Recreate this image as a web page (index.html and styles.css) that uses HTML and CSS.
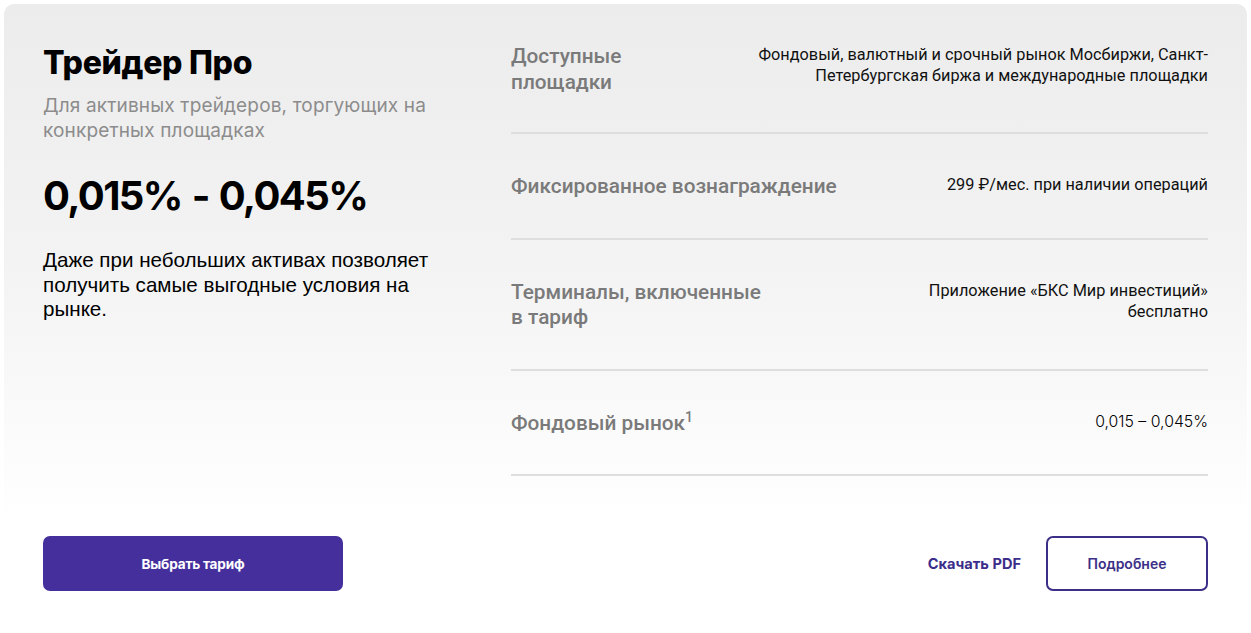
FILE: index.html
```html
<!DOCTYPE html>
<html lang="ru">
<head>
<meta charset="utf-8">
<title>Трейдер Про</title>
<link rel="stylesheet" href="styles.css">
</head>
<body>
<div class="page">
  <section class="card">
    <div class="intro">
      <h1 class="title">Трейдер Про</h1>
      <p class="subtitle">Для активных трейдеров, торгующих на конкретных площадках</p>
      <div class="price">0,015% - 0,045%</div>
      <p class="desc">Даже при небольших активах позволяет получить самые выгодные условия на рынке.</p>
    </div>
    <div class="specs">
      <div class="row">
        <div class="label">Доступные<br>площадки</div>
        <div class="value">Фондовый, валютный и срочный рынок Мосбиржи, Санкт-Петербургская биржа и международные площадки</div>
      </div>
      <div class="row">
        <div class="label">Фиксированное вознаграждение</div>
        <div class="value">299 ₽/мес. при наличии операций</div>
      </div>
      <div class="row">
        <div class="label">Терминалы, включенные<br>в тариф</div>
        <div class="value">Приложение «БКС Мир инвестиций»<br>бесплатно</div>
      </div>
      <div class="row">
        <div class="label">Фондовый рынок<sup>1</sup></div>
        <div class="value value-alt">0,015 – 0,045%</div>
      </div>
    </div>
  </section>
  <div class="actions">
    <button class="btn btn-primary">Выбрать тариф</button>
    <div class="actions-right">
      <a class="link-pdf" href="#">Скачать PDF</a>
      <button class="btn btn-outline">Подробнее</button>
    </div>
  </div>
</div>
</body>
</html>
```
FILE: styles.css
```css
* { box-sizing: border-box; }
html, body { margin: 0; padding: 0; background: #fff; }
body { font-family: Inter, "Liberation Sans", sans-serif; color: #000; }
.page { padding: 4px 4px 0 4px; width: 1251px; }
.card {
  display: flex;
  border-radius: 10px;
  background: linear-gradient(to bottom, #ececec 0%, #f3f3f3 50%, #ffffff 100%);
  padding: 40px 39px 46px 39px;
  height: 518px;
}
.intro { width: 420px; flex: none; }
.title {
  margin: 0;
  font-family: Inter, sans-serif;
  font-weight: 800;
  font-size: 32px;
  line-height: 38px;
  letter-spacing: -0.3px;
}
.subtitle {
  margin: 11px 0 0;
  font-family: Inter, sans-serif;
  font-size: 19px;
  line-height: 25px;
  color: #8c8c8c;
  letter-spacing: 0.15px;
  width: 410px;
}
.price {
  margin-top: 28px;
  font-family: Inter, sans-serif;
  font-weight: 700;
  font-size: 40px;
  line-height: 50px;
  letter-spacing: -1.6px;
  word-spacing: 2px;
}
.desc {
  margin: 27px 0 0;
  font-family: "Liberation Sans", Arial, sans-serif;
  font-size: 20.6px;
  line-height: 24.5px;
  width: 405px;
}
.specs { margin-left: 48px; flex: 1; }
.row {
  display: flex;
  justify-content: space-between;
  align-items: flex-start;
  padding: 0 0 37px;
  border-bottom: 2px solid #dedede;
}
.row + .row { padding-top: 40px; padding-bottom: 38px; }
.label {
  font-family: Roboto, sans-serif;
  font-weight: 500;
  font-size: 20.8px;
  line-height: 25.5px;
  color: #7a7a7a;
}
.label sup { font-size: 14px; line-height: 0; vertical-align: 8px; color: #7a7a7a; }
.value {
  font-family: Roboto, sans-serif;
  font-size: 16.3px;
  line-height: 21px;
  text-align: right;
  color: #111;
  max-width: 470px;
}
.value-alt { font-family: Inter, sans-serif; font-weight: 300; font-size: 15.8px; color: #000; }
.actions {
  display: flex;
  justify-content: space-between;
  align-items: center;
  padding: 14px 39px 0 39px;
}
.actions-right { display: flex; align-items: center; gap: 25px; }
.btn {
  height: 55px;
  border-radius: 7px;
  font-family: Inter, sans-serif;
  font-weight: 700;
  font-size: 14px;
  cursor: pointer;
}
.btn-primary {
  width: 300px;
  background: #442f9d;
  color: #fff;
  border: none;
  font-size: 13.6px;
  letter-spacing: -0.2px;
}
.btn-outline {
  width: 162px;
  background: #fff;
  color: #3c2f88;
  border: 2px solid #3c2f88;
  font-weight: 600;
}
.link-pdf {
  font-family: Inter, sans-serif;
  font-weight: 700;
  font-size: 14.6px;
  color: #3b2d8a;
  text-decoration: none;
}
```
